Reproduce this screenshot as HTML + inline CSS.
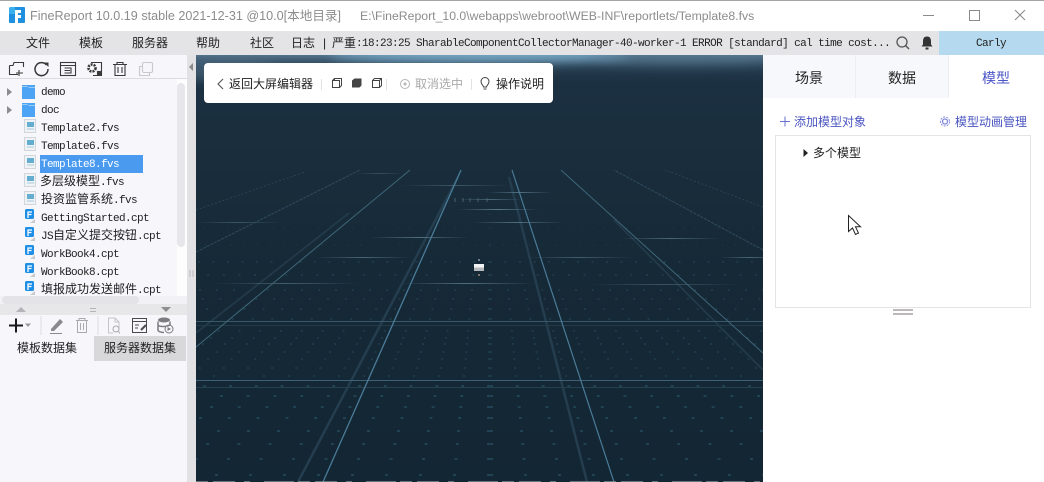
<!DOCTYPE html>
<html><head><meta charset="utf-8"><style>
*{box-sizing:border-box}
html,body{margin:0;padding:0}
body{width:1044px;height:482px;position:relative;overflow:hidden;background:#fff;font-family:"Liberation Sans","Noto Sans CJK SC",sans-serif;color:#222}
.a{position:absolute;white-space:nowrap}
.z{font-size:12px;line-height:18px}
.m{font-family:"Liberation Mono","Noto Sans CJK SC",monospace;font-size:11px;letter-spacing:-.6px}
.r{position:absolute;left:41px;height:18px;line-height:18px;font-size:12px;white-space:nowrap;color:#222;font-family:"Liberation Mono","Noto Sans CJK SC",monospace}
.r b{font-weight:400;font-size:11px;letter-spacing:-.6px}
</style></head><body>
<!-- title bar -->
<div class="a" style="left:0;top:0;width:1044px;height:1px;background:#a5a5a5"></div>
<svg class="a" style="left:8px;top:6px" width="18" height="18" viewBox="0 0 18 18"><path d="M3 1H16a1 1 0 0 1 1 1V16a1 1 0 0 1-1 1H2a1 1 0 0 1-1-1V3a2 2 0 0 1 2-2z" fill="#1f8fe0"/><path d="M1 8V3a2 2 0 0 1 2-2H7V8z" fill="#3bb0ee"/><path d="M7 4H13V7H10V9H13V12H10V17H7z" fill="#fff"/></svg>
<div class="a" style="left:30px;top:8px;font-size:12.6px;line-height:16px;color:#8c8c8c">FineReport 10.0.19 stable 2021-12-31 @10.0[本地目录]</div>
<div class="a" style="left:360px;top:8px;font-size:12.26px;line-height:16px;color:#8c8c8c">E:\FineReport_10.0\webapps\webroot\WEB-INF\reportlets/Template8.fvs</div>
<svg class="a" style="left:915px;top:5px" width="120" height="20" fill="none" stroke="#8a8a8a"><path d="M8 10.500H19"/><path d="M54.500 5.500H64.500V15.500H54.500z"/><path d="M100 5L110 15M110 5L100 15"/></svg>
<!-- menu bar -->
<div class="a" style="left:0;top:31px;width:1044px;height:24px;background:#e4e4e7"></div>
<div class="a z" style="left:26px;top:34px">文件</div>
<div class="a z" style="left:79px;top:34px">模板</div>
<div class="a z" style="left:132px;top:34px">服务器</div>
<div class="a z" style="left:196px;top:34px">帮助</div>
<div class="a z" style="left:250px;top:34px">社区</div>
<div class="a z" style="left:291px;top:34px">日志</div>
<div class="a z" style="left:323px;top:34px">|</div>
<div class="a z" style="left:332px;top:34px">严重</div>
<div class="a m" style="left:356px;top:35px;line-height:18px;color:#222">:18:23:25 SharableComponentCollectorManager-40-worker-1 ERROR [standard] cal time cost...</div>
<svg class="a" style="left:895px;top:35px" width="40" height="16"><circle cx="7" cy="7" r="5" fill="none" stroke="#555" stroke-width="1.300"/><path d="M10.500 10.500L14 14" stroke="#555" stroke-width="1.500"/><path d="M32 1.500c-3 0-4 2-4 5v3l-1.500 2h11L36 9.500v-3c0-3-1-5-4-5z" fill="#333"/><rect x="30.500" y="12.500" width="3" height="2" fill="#333"/></svg>
<div class="a" style="left:939px;top:31px;width:105px;height:24px;background:#b5d9ee"></div>
<div class="a m" style="left:976px;top:35px;line-height:18px;color:#222">Carly</div>
<!-- left panel -->
<div class="a" style="left:0;top:55px;width:187px;height:427px;background:#f6f6fb"></div>
<div class="a" style="left:187px;top:55px;width:9px;height:427px;background:#e2e2e5"></div>
<div class="a" style="left:0;top:78px;width:187px;height:1px;background:#dcdce0"></div>
<svg class="a" style="left:0;top:55px" width="187" height="24" fill="none" stroke="#3a3a3a" stroke-width="1.100">
<path d="M9.500 10.500H13L14 7.500H23.500V12M9.500 10.500V19.500H18M19 15V21M16 18H23"/>
<path d="M46.500 10A6.500 6.500 0 1 0 48 14" stroke-width="1.500"/><path d="M44 7.500H48.500V12z" fill="#3a3a3a" stroke="none"/>
<rect x="60.500" y="7.500" width="15" height="13"/><path d="M60.500 10.500H75.500M64.500 13H71V18H64.500M64.500 15.500H70"/>
<path d="M91 7.500H101.500V20.500H93"/><circle cx="92" cy="13" r="3.500" stroke-width="2.600" stroke-dasharray="2 1"/><rect x="97.500" y="16.500" width="3" height="3" fill="#3a3a3a"/>
<path d="M113 9.500H127M117 9.500V7.500H123V9.500M115 9.500V20.500H125V9.500M118 12V18M122 12V18"/>
<rect x="142.500" y="7.500" width="10" height="10" rx="1.500" stroke="#c9c9cd"/><path d="M142.500 11.500H139.500V20.500H149.500V17.500" stroke="#c9c9cd"/>
</svg>
<!-- tree -->
<div class="a" style="left:0;top:79px;width:177px;height:217px;overflow:hidden">
<svg class="a" style="left:0;top:0" width="60" height="40"><path d="M7 9L12 13L7 17zM7 27L12 31L7 35z" fill="#8d8d90"/><path d="M22 6H35V20H22z" fill="#4da3f4"/><path d="M22 7H27L29 9H35V8H22z" fill="#9accf8"/><path d="M22 24H35V38H22z" fill="#4da3f4"/><path d="M22 25H27L29 27H35V26H22z" fill="#9accf8"/></svg>
<div class="a" style="left:40px;top:76px;width:103px;height:18px;background:#4a9bf0"></div>
<svg class="a" style="left:22px;top:39px" width="16" height="180">
<g><rect x="2.500" y="1.500" width="11" height="13" fill="#f0f3f6" stroke="#d2d6da"/><rect x="5" y="4" width="7" height="5" fill="#63aed0"/><path d="M5 11H12" stroke="#a8cadb"/></g>
<g transform="translate(0,18)"><rect x="2.500" y="1.500" width="11" height="13" fill="#f0f3f6" stroke="#d2d6da"/><rect x="5" y="4" width="7" height="5" fill="#63aed0"/><path d="M5 11H12" stroke="#a8cadb"/></g>
<g transform="translate(0,36)"><rect x="2.500" y="1.500" width="11" height="13" fill="#f0f3f6" stroke="#d2d6da"/><rect x="5" y="4" width="7" height="5" fill="#63aed0"/><path d="M5 11H12" stroke="#a8cadb"/></g>
<g transform="translate(0,54)"><rect x="2.500" y="1.500" width="11" height="13" fill="#f0f3f6" stroke="#d2d6da"/><rect x="5" y="4" width="7" height="5" fill="#63aed0"/><path d="M5 11H12" stroke="#a8cadb"/></g>
<g transform="translate(0,72)"><rect x="2.500" y="1.500" width="11" height="13" fill="#f0f3f6" stroke="#d2d6da"/><rect x="5" y="4" width="7" height="5" fill="#63aed0"/><path d="M5 11H12" stroke="#a8cadb"/></g>
<g transform="translate(0,90)"><rect x="3" y="1" width="9" height="10" rx="1.500" fill="#1e8fe6"/><path d="M6 10V4H10M6 6.500H9.500" stroke="#fff" stroke-width="1.300" fill="none"/><path d="M8 15L13 11V15z" fill="#c9c9cc"/></g>
<g transform="translate(0,108)"><rect x="3" y="1" width="9" height="10" rx="1.500" fill="#1e8fe6"/><path d="M6 10V4H10M6 6.500H9.500" stroke="#fff" stroke-width="1.300" fill="none"/><path d="M8 15L13 11V15z" fill="#c9c9cc"/></g>
<g transform="translate(0,126)"><rect x="3" y="1" width="9" height="10" rx="1.500" fill="#1e8fe6"/><path d="M6 10V4H10M6 6.500H9.500" stroke="#fff" stroke-width="1.300" fill="none"/><path d="M8 15L13 11V15z" fill="#c9c9cc"/></g>
<g transform="translate(0,144)"><rect x="3" y="1" width="9" height="10" rx="1.500" fill="#1e8fe6"/><path d="M6 10V4H10M6 6.500H9.500" stroke="#fff" stroke-width="1.300" fill="none"/><path d="M8 15L13 11V15z" fill="#c9c9cc"/></g>
<g transform="translate(0,162)"><rect x="3" y="1" width="9" height="10" rx="1.500" fill="#1e8fe6"/><path d="M6 10V4H10M6 6.500H9.500" stroke="#fff" stroke-width="1.300" fill="none"/><path d="M8 15L13 11V15z" fill="#c9c9cc"/></g>
</svg>
<div class="r" style="top:4px"><b>demo</b></div>
<div class="r" style="top:22px"><b>doc</b></div>
<div class="r" style="top:40px"><b>Template2.fvs</b></div>
<div class="r" style="top:58px"><b>Template6.fvs</b></div>
<div class="r" style="top:76px;color:#fff"><b>Template8.fvs</b></div>
<div class="r" style="top:94px;left:40px">多层级模型<b>.fvs</b></div>
<div class="r" style="top:112px;left:41px">投资监管系统<b>.fvs</b></div>
<div class="r" style="top:130px"><b>GettingStarted.cpt</b></div>
<div class="r" style="top:148px"><b>JS</b>自定义提交按钮<b>.cpt</b></div>
<div class="r" style="top:166px"><b>WorkBook4.cpt</b></div>
<div class="r" style="top:184px"><b>WorkBook8.cpt</b></div>
<div class="r" style="top:202px">填报成功发送邮件<b>.cpt</b></div>
</div>
<div class="a" style="left:177px;top:79px;width:10px;height:217px;background:#fdfdfe"></div>
<div class="a" style="left:177px;top:83px;width:8px;height:164px;background:#e7e7eb;border-radius:4px"></div>
<div class="a" style="left:0;top:296px;width:187px;height:8px;background:#f2f2f6"></div>
<div class="a" style="left:2px;top:296px;width:137px;height:8px;background:#e4e4e8;border-radius:4px"></div>
<div class="a" style="left:0;top:304px;width:187px;height:11px;background:#e7e7ea"></div>
<svg class="a" style="left:0;top:304px" width="187" height="11"><path d="M16 8L21 3L26 8z" fill="#b4b4b7"/><path d="M161 3H171L166 8z" fill="#8d8d90"/><path d="M90 4.500H96M90 7.500H96" stroke="#b4b4b7"/></svg>
<svg class="a" style="left:0;top:315px" width="187" height="21" fill="none">
<path d="M9 10.500H23M16 3.500V17.500" stroke="#1a1a1a" stroke-width="2"/><path d="M25 8.500H31L28 12z" fill="#9a9a9d"/>
<path d="M41 1V20" stroke="#dcdce0"/>
<path d="M51 14L60 4L63 7L54 16H51z" fill="#8a8a8d"/><path d="M50 18.500H62" stroke="#8a8a8d"/>
<path d="M76 5.500H88M79 5.500V3.500H85V5.500M77.500 5.500V17.500H86.500V5.500M80.500 8V15M83.500 8V15" stroke="#aaaaad"/>
<path d="M98 1V20" stroke="#dcdce0"/>
<path d="M119 14V7L115 3H108.500V18H113M115 3V7H119" stroke="#c5c5c9"/><circle cx="116" cy="14" r="3" stroke="#aaaaad"/><path d="M118 16L120 18.500" stroke="#aaaaad"/>
<rect x="132.500" y="3.500" width="14" height="14" stroke="#4a4a4c"/><path d="M132.500 6.500H146.500M135 10H139M135 13H138" stroke="#4a4a4c"/><path d="M141 15L146 10" stroke="#4a4a4c" stroke-width="2"/>
<ellipse cx="164" cy="5" rx="6" ry="2.500" fill="#7c7c80"/><path d="M158 6.500V15c0 1.500 3 2.500 6 2.500M170 6.500V10" stroke="#7c7c80" stroke-width="1.500"/><path d="M158 10c1 2 8 2 12 0" stroke="#7c7c80" stroke-width="1.500"/><circle cx="169" cy="14" r="4" stroke="#7c7c80"/><path d="M167.500 12V16L171 14z" fill="#7c7c80"/>
</svg>
<div class="a" style="left:94px;top:336px;width:92px;height:25px;background:#d8d8da"></div>
<div class="a z" style="left:17px;top:339px">模板数据集</div>
<div class="a z" style="left:104px;top:339px">服务器数据集</div>
<svg class="a" style="left:187px;top:55px" width="9" height="230"><path d="M6 8L2 12L6 16z" fill="#8a8a8d"/><path d="M3 215V222M6 215V222" stroke="#b8b8bb"/></svg>
<!-- canvas -->
<svg class="a" style="left:196px;top:55px" width="567" height="427" viewBox="196 55 567 427">
<defs>
<linearGradient id="bg" x1="0" y1="0" x2="0" y2="1"><stop offset="0" stop-color="#1c3142"/><stop offset=".25" stop-color="#192d3c"/><stop offset=".5" stop-color="#162937"/><stop offset="1" stop-color="#132634"/></linearGradient>
<linearGradient id="sky" x1="0" y1="0" x2="0" y2="1"><stop offset="0" stop-color="#5b7c96" stop-opacity=".9"/><stop offset=".4" stop-color="#3a566c" stop-opacity=".5"/><stop offset="1" stop-color="#1d3344" stop-opacity="0"/></linearGradient>
<linearGradient id="h"><stop offset="0" stop-color="#5f8090" stop-opacity="0"/><stop offset=".5" stop-color="#5f8090"/><stop offset="1" stop-color="#5f8090" stop-opacity="0"/></linearGradient>
<filter id="bl" x="-20%" y="-100%" width="140%" height="300%"><feGaussianBlur stdDeviation="5"/></filter>
</defs>
<rect x="196" y="55" width="567" height="427" fill="url(#bg)"/>
<rect x="196" y="55" width="567" height="30" fill="url(#sky)"/>
<ellipse cx="480" cy="55" rx="150" ry="7" fill="#7fb4d4" opacity=".8" filter="url(#bl)"/>
<ellipse cx="230" cy="70" rx="50" ry="14" fill="#4d6c84" opacity=".55" filter="url(#bl)"/>
<ellipse cx="680" cy="58" rx="90" ry="6" fill="#587a92" opacity=".55" filter="url(#bl)"/>
<!-- dots -->
<g fill="none" stroke="#2c5d70" stroke-width="1">
<path d="M490 475H763M490 475H196" stroke-dasharray="3 31"/>
<path d="M490 459H763M490 459H196" stroke-dasharray="3 29.500"/>
<path d="M490 444H763M490 444H196" stroke-dasharray="3 28.200"/>
<path d="M490 431H763M490 431H196" stroke-dasharray="3 27"/>
<path d="M490 418H763M490 418H196" stroke-dasharray="3 25.800"/>
<path d="M490 407H763M490 407H196" stroke-dasharray="3 24.700"/>
<path d="M490 396H763M490 396H196" stroke-dasharray="3 23.700"/>
<path d="M490 386H763M490 386H196" stroke-dasharray="3 22.800"/>
</g>
<g fill="none" stroke="#264a5a" stroke-width="1">
<path d="M490 376H763M490 376H196" stroke-dasharray="2 23"/>
<path d="M490 368H763M490 368H196" stroke-dasharray="2 22.100"/>
<path d="M490 359H763M490 359H196" stroke-dasharray="2 21.400"/>
<path d="M490 352H763M490 352H196" stroke-dasharray="2 20.700"/>
<path d="M490 344H763M490 344H196" stroke-dasharray="2 20"/>
<path d="M490 338H763M490 338H196" stroke-dasharray="2 19.400"/>
<path d="M490 331H763M490 331H196" stroke-dasharray="2 18.800"/>
<path d="M490 319H763M490 319H196" stroke-dasharray="2 17.700"/>
<path d="M490 309H763M490 309H196" stroke-dasharray="2 16.800"/>
<path d="M490 299H763M490 299H196" stroke-dasharray="2 15.900"/>
<path d="M490 290H763M490 290H196" stroke-dasharray="2 15"/>
<path d="M490 275H763M490 275H196" stroke-dasharray="2 13.600"/>
<path d="M490 262H763M490 262H196" stroke-dasharray="2 12.500"/>
<path d="M490 245H763M490 245H196" stroke-dasharray="1 11.900" opacity=".7"/>
<path d="M490 228H763M490 228H196" stroke-dasharray="1 10.400" opacity=".5"/>
<path d="M490 214H763M490 214H196" stroke-dasharray="1 9" opacity=".4"/>
</g>
<!-- dim wide lines -->
<g fill="none" stroke="#243e4f" stroke-width="2.500">
<path d="M298 482L458 177"/><path d="M587 482L509 177"/>
</g>
<g fill="none" stroke="#223a4a" stroke-width="1.800">
<path d="M196 333L349 213"/><path d="M763 370L614 220"/>
</g>
<!-- horizontal lines -->
<path d="M196 321.500H763" stroke="#37596b" fill="none"/>
<path d="M196 325.500H763" stroke="#213b4a" fill="none"/>
<path d="M196 380.500H763" stroke="#3b6277" fill="none"/>
<path d="M196 387.500H763" stroke="#25404f" fill="none"/>
<g fill="url(#h)">
<rect x="356" y="173" width="47" height="1" opacity=".4"/>
<rect x="400" y="185" width="109" height="1" opacity=".5"/>
<rect x="487" y="192" width="65" height="1" opacity=".8"/>
<rect x="458" y="199" width="65" height="1" opacity=".7"/>
<rect x="458" y="209" width="80" height="1" opacity=".9"/>
<rect x="472" y="222" width="91" height="1" opacity=".8"/>
<rect x="196" y="222" width="84" height="1" opacity=".5"/>
<rect x="370" y="237" width="99" height="1" opacity=".8"/>
<rect x="621" y="238" width="99" height="1" opacity=".7"/>
<rect x="316" y="257" width="94" height="1" opacity=".7"/>
<rect x="527" y="257" width="105" height="1" opacity=".6"/>
<rect x="720" y="257" width="60" height="1" opacity=".7"/>
<rect x="214" y="283" width="146" height="1" opacity=".6"/>
<rect x="400" y="283" width="134" height="1" opacity=".8"/>
<rect x="589" y="284" width="152" height="1" opacity=".5"/>
</g>
<path d="M455 198V202M463 198V202M470 198V202M478 198V202M487 198V202" stroke="#47626f" fill="none"/>
<!-- main bright lines -->
<g fill="none">
<path d="M323 482L461 170" stroke="#4a7c98" stroke-width="1.300"/>
<path d="M614 482L512 170" stroke="#4a7c98" stroke-width="1.200"/>
<path d="M196 347L410 170" stroke="#3f6779" stroke-width="1"/>
<path d="M763 353L561 170" stroke="#3f6779" stroke-width="1"/>
<path d="M196 252L360 170" stroke="#2f4c5d" stroke-dasharray="3 1"/>
<path d="M196 210L305 172" stroke="#294353" stroke-dasharray="2 2"/>
<path d="M763 250L614 170" stroke="#2f4c5d" stroke-dasharray="3 1"/>
<path d="M763 207L665 170" stroke="#294353" stroke-dasharray="2 2"/>
</g>
<!-- model -->
<rect x="474" y="264" width="10" height="3.500" fill="#f2f4f6"/><rect x="474" y="267.500" width="10" height="3.500" fill="#b4b8bb"/>
<circle cx="479" cy="260" r="1" fill="#8c9aa3"/><circle cx="479" cy="275" r="1" fill="#a58c80"/>
<!-- bottom noise -->
<path d="M196 481.500H763" stroke="#8a959b" stroke-dasharray="12 5 22 9 6 14 30 4" opacity=".7"/>
</svg>
<!-- canvas toolbar -->
<div class="a" style="left:204px;top:63px;width:349px;height:40px;background:#fff;border-radius:4px"></div>
<svg class="a" style="left:204px;top:63px" width="349" height="40" fill="none">
<path d="M19 16L14 21L19 26" stroke="#555" stroke-width="1.100"/>
<path d="M117.500 16V27M182.500 16V27M267.500 16V27" stroke="#e2e2e2"/>
<rect x="128.500" y="17.500" width="7" height="7" stroke="#444"/><path d="M128.500 17.500L130.500 15.500H137.500V22.500L135.500 24.500M130.500 17.500V15.500" stroke="#444"/>
<path d="M148 17.500L150.500 15.500H157.500V22.500L155.500 24.500H148z" fill="#444"/>
<path d="M168.500 17.500L170.500 15.500H177.500V22.500L175.500 24.500H168.500z" stroke="#444"/><path d="M168.500 17.500H175.500V24.500M175.500 17.500L177.500 15.500" stroke="#444"/>
<circle cx="201" cy="21" r="4.500" stroke="#b5b5b5"/><circle cx="201" cy="21" r="1.500" fill="#b5b5b5"/>
<path d="M279.500 24c0-1.500-2.500-2.500-2.500-5.500a4 4 0 0 1 8 0c0 3-2.500 4-2.500 5.500zM279.500 26H282.500" stroke="#444"/>
</svg>
<div class="a z" style="left:229px;top:75px">返回大屏编辑器</div>
<div class="a z" style="left:415px;top:75px;color:#a9a9a9">取消选中</div>
<div class="a z" style="left:496px;top:75px">操作说明</div>
<!-- right panel -->
<div class="a" style="left:763px;top:55px;width:281px;height:427px;background:#fff"></div>
<div class="a" style="left:763px;top:55px;width:185px;height:43px;background:#f6f8fb"></div>
<div class="a" style="left:855px;top:55px;width:1px;height:43px;background:#eceef2"></div>
<div class="a" style="left:948px;top:55px;width:1px;height:43px;background:#eceef2"></div>
<div class="a" style="left:795px;top:69px;font-size:14px;line-height:18px">场景</div>
<div class="a" style="left:888px;top:69px;font-size:14px;line-height:18px">数据</div>
<div class="a" style="left:982px;top:69px;font-size:14px;line-height:18px;color:#4a55c8">模型</div>
<svg class="a" style="left:779px;top:115px" width="180" height="14" fill="none"><path d="M6 1.500V11.500M1 6.500H11" stroke="#6a70d0"/><circle cx="166" cy="6.500" r="2.500" stroke="#8088d8" stroke-width="1.300"/><circle cx="166" cy="6.500" r="4.500" stroke="#8088d8" stroke-dasharray="2 1.200"/></svg>
<div class="a z" style="left:794px;top:113px;color:#4a55c0">添加模型对象</div>
<div class="a z" style="left:955px;top:113px;color:#4a55c0">模型动画管理</div>
<div class="a" style="left:775px;top:135px;width:256px;height:173px;border:1px solid #e4e4e4"></div>
<svg class="a" style="left:802px;top:148px" width="8" height="10"><path d="M1.500 1L6 5L1.500 9z" fill="#222"/></svg>
<div class="a z" style="left:813px;top:144px">多个模型</div>
<svg class="a" style="left:847px;top:214px" width="16" height="22"><path d="M1.500 1.500V17.500L5.500 14L8.500 20.500L11.500 19L8.500 12.800H13.500z" fill="#fff" stroke="#222" stroke-width="1"/></svg>
<div class="a" style="left:893px;top:309px;width:20px;height:2px;background:#bdb8b8"></div>
<div class="a" style="left:893px;top:313px;width:20px;height:2px;background:#bdb8b8"></div>
</body></html>
